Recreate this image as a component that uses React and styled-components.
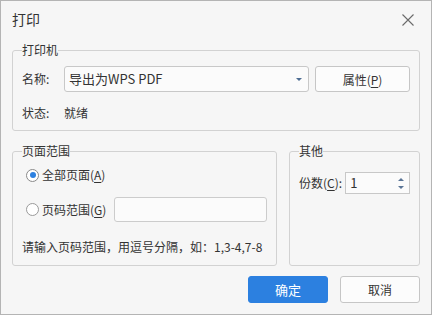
import React from 'react'
import styled, { createGlobalStyle } from 'styled-components'

const GlobalStyle = createGlobalStyle`
  html, body {
    margin: 0;
    padding: 0;
    background: #ffffff;
  }
  body {
    font-family: "Noto Sans CJK SC", "Noto Sans", sans-serif;
    color: #333333;
  }
  * {
    box-sizing: border-box;
  }
`

const Dialog = styled.div`
  background: #f6f6f6;
  border: 1px solid #b4b4b4;
  display: flex;
  flex-direction: column;
  height: 315px;
  padding: 0 11px;
  width: 432px;
`

const TitleBar = styled.div`
  align-items: center;
  display: flex;
  height: 34px;
  justify-content: space-between;
`

const Title = styled.span`
  font-size: 14px;
  line-height: 16px;
  margin-top: 1px;
`

const CloseButton = styled.button`
  background: none;
  border: none;
  cursor: pointer;
  display: flex;
  height: 16px;
  margin-right: 4px;
  margin-top: 4px;
  padding: 0;
  width: 16px;
`

const Group = styled.fieldset`
  border: 1px solid #d2d2d2;
  border-radius: 3px;
  display: flex;
  flex-direction: column;
  gap: ${p => p.$gap || 0}px;
  margin: 0;
  min-width: 0;
  padding: 8px 9px ${p => p.$bottom || 9}px;
  width: ${p => p.$width ? `${p.$width}px` : 'auto'};
`

const Legend = styled.legend`
  font-size: 12px;
  line-height: 16px;
  padding: 0;
`

const Row = styled.div`
  align-items: center;
  display: flex;
  font-size: 12px;
  gap: ${p => p.$gap || 0}px;
  height: ${p => p.$height || 16}px;
  line-height: 16px;
`

const Label = styled.span`
  flex: none;
  width: ${p => p.$width ? `${p.$width}px` : 'auto'};
`

const Select = styled.div`
  align-items: center;
  background: #fbfbfb;
  border: 1px solid #c8c8c8;
  border-radius: 3px;
  display: flex;
  flex: 1;
  font-size: 13px;
  height: 26px;
  justify-content: space-between;
  padding: 0 6px 0 4px;
`

const Caret = styled.span`
  border-left: 3px solid transparent;
  border-right: 3px solid transparent;
  border-top: 3px solid #4d6c92;
  height: 0;
  width: 0;
`

const Button = styled.button`
  background: ${p => p.$primary ? '#2c80e0' : '#fcfcfc'};
  border: 1px solid ${p => p.$primary ? '#2c80e0' : '#c6c6c6'};
  border-radius: 3px;
  color: ${p => p.$primary ? '#ffffff' : '#333333'};
  cursor: pointer;
  flex: none;
  font-family: inherit;
  font-size: ${p => p.$primary ? 13 : 12}px;
  height: ${p => p.$height || 27}px;
  padding: 0;
  width: ${p => p.$width || 80}px;
`

const Key = styled.u`
  text-decoration-thickness: 1px;
  text-underline-offset: 2px;
`

const Columns = styled.div`
  display: flex;
  gap: 12px;
  margin-top: 12px;
`

const Radio = styled.span`
  align-items: center;
  background: #ffffff;
  border: 1px solid ${p => p.$checked ? '#8a8a8a' : '#9a9a9a'};
  border-radius: 50%;
  display: flex;
  flex: none;
  height: 13px;
  justify-content: center;
  margin: 0 3px 0 4px;
  width: 13px;

  &::after {
    background: #2c80e0;
    border-radius: 50%;
    content: '';
    display: ${p => p.$checked ? 'block' : 'none'};
    height: 6px;
    width: 6px;
  }
`

const TextBox = styled.div`
  background: #fbfbfb;
  border: 1px solid #cccccc;
  border-radius: 3px;
  flex: 1;
  height: 25px;
  margin-left: 8px;
`

const Hint = styled.div`
  font-size: 12px;
  line-height: 16px;
`

const Spin = styled.div`
  align-items: center;
  background: #fbfbfb;
  border: 1px solid #c8c8c8;
  display: flex;
  flex: 1;
  font-size: 13px;
  height: 22px;
  justify-content: space-between;
  margin-left: 3px;
  padding: 0 5px 0 4px;
`

const Arrows = styled.span`
  display: flex;
  flex-direction: column;
  gap: 5px;
`

const Arrow = styled.span`
  border-left: 3px solid transparent;
  border-right: 3px solid transparent;
  ${p => p.$up ? 'border-bottom' : 'border-top'}: 3px solid #5a7596;
  height: 0;
  width: 0;
`

const Footer = styled.div`
  display: flex;
  gap: 12px;
  justify-content: flex-end;
  margin-top: 10px;
`

const App = () => (
  <>
    <GlobalStyle />
    <Dialog>
      <TitleBar>
        <Title>打印</Title>
        <CloseButton aria-label="关闭">
          <svg width="16" height="16" viewBox="0 0 16 16">
            <path d="M2.5 2.5 L13.5 13.5 M13.5 2.5 L2.5 13.5" stroke="#6a6a6a" strokeWidth="1.1" fill="none" />
          </svg>
        </CloseButton>
      </TitleBar>

      <Group $gap={13} style={{ marginTop: 7 }}>
        <Legend>打印机</Legend>
        <Row $height={26}>
          <Label $width={42}>名称:</Label>
          <Select>
            <span>导出为WPS PDF</span>
            <Caret />
          </Select>
          <Button $width={95} $height={26} style={{ marginLeft: 6 }}>
            属性(<Key>P</Key>)
          </Button>
        </Row>
        <Row>
          <Label $width={42}>状态:</Label>
          <span>就绪</span>
        </Row>
      </Group>

      <Columns>
        <Group $width={265} $bottom={10}>
          <Legend>页面范围</Legend>
          <Row>
            <Radio $checked />
            <span>全部页面(<Key>A</Key>)</span>
          </Row>
          <Row $height={25} style={{ marginTop: 14 }}>
            <Radio />
            <span>页码范围(<Key>G</Key>)</span>
            <TextBox />
          </Row>
          <Hint style={{ marginTop: 17 }}>请输入页码范围，用逗号分隔，如：1,3-4,7-8</Hint>
        </Group>
        <Group style={{ flex: 1 }}>
          <Legend>其他</Legend>
          <Row $height={22} style={{ marginTop: 5 }}>
            <Label>份数(<Key>C</Key>):</Label>
            <Spin>
              <span>1</span>
              <Arrows>
                <Arrow $up />
                <Arrow />
              </Arrows>
            </Spin>
          </Row>
        </Group>
      </Columns>

      <Footer>
        <Button $primary>确定</Button>
        <Button>取消</Button>
      </Footer>
    </Dialog>
  </>
)

export default App
